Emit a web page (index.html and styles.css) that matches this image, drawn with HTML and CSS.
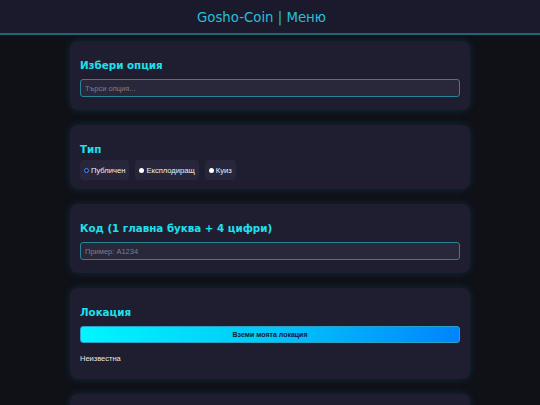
FILE: index.html
```html
<!DOCTYPE html>
<html lang="bg">
<head>
<meta charset="utf-8">
<title>Gosho-Coin | Меню</title>
<link rel="stylesheet" href="styles.css">
</head>
<body>
<header class="topbar">
  <h1 class="title">Gosho-Coin | Меню</h1>
</header>
<main class="container">
  <section class="card">
    <h2 class="card-title">Избери опция</h2>
    <input class="field" type="text" placeholder="Търси опция...">
  </section>
  <section class="card card-type">
    <h2 class="card-title title-tight">Тип</h2>
    <div class="radios">
      <label class="radio"><span class="dot dot-on"></span>Публичен</label>
      <label class="radio"><span class="dot"></span>Експлодиращ</label>
      <label class="radio"><span class="dot"></span>Куиз</label>
    </div>
  </section>
  <section class="card">
    <h2 class="card-title">Код (1 главна буква + 4 цифри)</h2>
    <input class="field" type="text" placeholder="Пример: A1234">
  </section>
  <section class="card card-loc">
    <h2 class="card-title">Локация</h2>
    <button class="btn" type="button">Вземи моята локация</button>
    <p class="loc-text">Неизвестна</p>
  </section>
  <section class="card card-last"></section>
</main>
</body>
</html>
```
FILE: styles.css
```css
* { box-sizing: border-box; }
html, body { margin: 0; padding: 0; }
body {
  background: #101017;
  font-family: "Liberation Sans", Arial, sans-serif;
  color: #e6e6ee;
  height: 405px;
  overflow: hidden;
}
.topbar {
  height: 35px;
  padding: 1px 17px 0 0;
  background: #1b1a2d;
  border-bottom: 2px solid #1f6677;
  display: flex;
  align-items: center;
  justify-content: center;
}
.title {
  margin: 0;
  font-family: "DejaVu Sans", Verdana, sans-serif;
  font-weight: normal;
  font-size: 13.3px;
  color: #27bfd6;
}
.container {
  width: 400px;
  margin: 6px auto 0;
  display: flex;
  flex-direction: column;
  gap: 15px;
}
.card {
  background: #1f1e30;
  border-radius: 8px;
  padding: 18px 10px 13px;
  box-shadow: 0 0 8px rgba(0, 190, 230, 0.16);
}
.card-title {
  margin: 0 0 7px;
  font-family: "DejaVu Sans", Verdana, sans-serif;
  font-weight: bold;
  font-size: 10.3px;
  line-height: 13px;
  color: #1fe0ee;
}
.title-tight { margin-bottom: 4px; }
.field {
  display: block;
  width: 100%;
  height: 18px;
  margin: 0;
  padding: 0 4px;
  background: #29283b;
  border: 1px solid #2a8497;
  border-radius: 3px;
  font-family: "Liberation Sans", Arial, sans-serif;
  font-size: 7.5px;
  color: #ddd;
}
.field::placeholder { color: #7d7d8c; }
.card-type { padding-bottom: 9px; }
.radios { display: flex; gap: 6px; }
.radio {
  display: flex;
  align-items: center;
  gap: 2px;
  height: 20px;
  padding: 0 4px;
  background: #27263a;
  border-radius: 4px;
  font-size: 7.6px;
  color: #f0f0f5;
}
.dot {
  width: 5px;
  height: 5px;
  border-radius: 50%;
  background: #fff;
}
.dot-on {
  background: #1b1a2d;
  border: 1.5px solid #3d8cff;
}
.btn {
  display: block;
  width: 100%;
  height: 17px;
  margin: 0;
  border: 1px solid #2da0c8;
  border-radius: 3px;
  background: linear-gradient(90deg, #00f6ff 0%, #00c8f8 50%, #0084ff 100%);
  font-family: "Liberation Sans", Arial, sans-serif;
  font-weight: bold;
  font-size: 7px;
  color: #102030;
}
.loc-text {
  margin: 11px 0 0;
  font-size: 7.5px;
  line-height: 10px;
  color: #e6e6ee;
}
.card-loc { padding-bottom: 15px; }
.card-last { height: 60px; }
```
